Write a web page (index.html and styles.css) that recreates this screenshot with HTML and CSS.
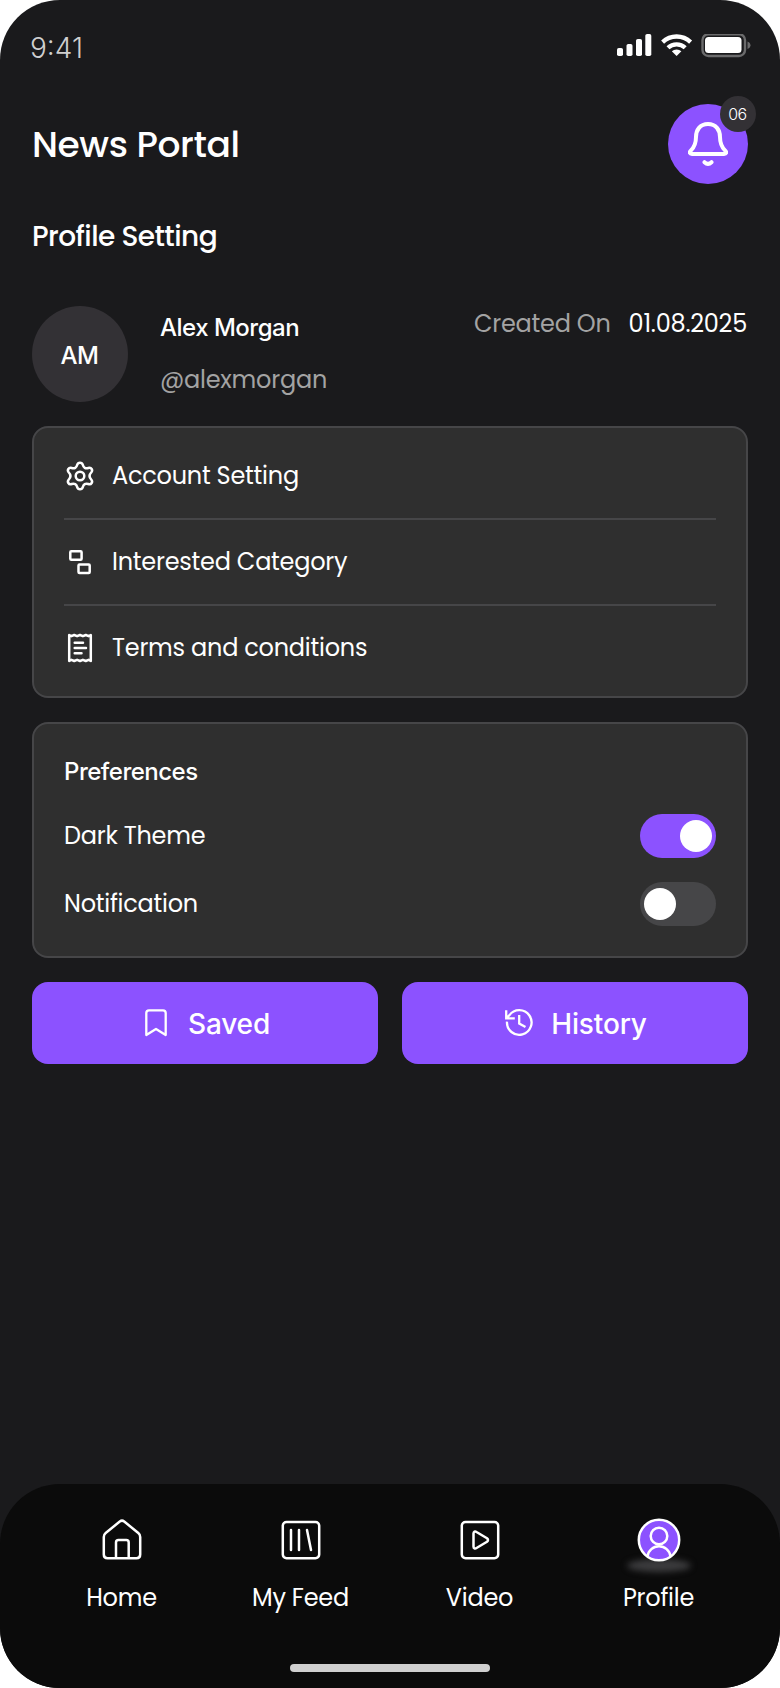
FILE: index.html
```html
<!DOCTYPE html>
<html lang="en">
<head>
<meta charset="utf-8">
<title>News Portal</title>
<link rel="stylesheet" href="styles.css">
</head>
<body>
<div class="phone">
  <div class="status">
    <span class="time">9:41</span>
    <svg class="status-icons" width="134" height="24" viewBox="0 0 134 24">
      <g fill="#fff">
        <rect x="0" y="14" width="6" height="8" rx="1.8"/><rect x="9.5" y="10" width="6" height="12" rx="1.8"/><rect x="19" y="5" width="6" height="17" rx="1.8"/><rect x="28.3" y="0" width="6" height="22" rx="1.8"/>
        <rect x="88" y="3" width="36.500" height="16" rx="3.500"/>
      </g>
      <g fill="none" stroke="#fff" stroke-width="4.300">
        <path d="M45.600 8.100a20.300 20.300 0 0 1 28 0"/><path d="M51 13.800a12.500 12.500 0 0 1 17.200 0"/>
      </g>
      <path d="M54.800 17.300a7.200 7.200 0 0 1 9.600 0L59.600 22z" fill="#fff"/>
      <rect x="85.500" y="0.200" width="42.500" height="21.800" rx="6" fill="none" stroke="#6b6b6c" stroke-width="2.400"/>
      <path d="M130.500 7.500c4 1.500 4 6 0 7.500z" fill="#6b6b6c"/>
    </svg>
  </div>
  <header class="header">
    <h1 class="title">News Portal</h1>
    <div class="bell">
      <svg width="40" height="46" viewBox="0 0 40 46" fill="none" stroke="#fff" stroke-width="4" stroke-linecap="round" stroke-linejoin="round">
        <path d="M20 3C12 3 8 9 8 16C8 24 5.500 27 2.800 29.700C1 31.600 1.800 33 4 33H36C38.200 33 39 31.600 37.200 29.700C34.500 27 32 24 32 16C32 9 28 3 20 3Z"/>
        <path d="M16.500 41.200Q20 44.500 23.500 41.200"/>
      </svg>
      <span class="badge">06</span>
    </div>
  </header>
  <h2 class="section-title">Profile Setting</h2>
  <section class="profile">
    <div class="avatar">AM</div>
    <div class="who"><span class="name">Alex Morgan</span><span class="handle">@alexmorgan</span></div>
    <div class="created"><span class="created-label">Created On</span><span class="date">01.08.2025</span></div>
  </section>
  <section class="card menu">
    <div class="row">
      <svg width="32" height="32" viewBox="0 0 32 32" fill="none" stroke="#fff" stroke-width="2.500" stroke-linejoin="round"><circle cx="16" cy="16" r="4.300"/><path d="M13.200 4.800C14 2 18 2 18.800 4.800C19.500 7.800 21.500 8.900 24.300 8C27.300 7 29.300 10.200 27.200 12.500C25 14.800 25 17.200 27.200 19.500C29.300 21.800 27.300 25 24.300 24C21.500 23.100 19.500 24.200 18.800 27.200C18 30 14 30 13.200 27.200C12.500 24.200 10.500 23.100 7.700 24C4.700 25 2.700 21.800 4.800 19.500C7 17.200 7 14.800 4.800 12.500C2.700 10.200 4.700 7 7.700 8C10.500 8.900 12.500 7.800 13.200 4.800Z"/></svg>
      <span>Account Setting</span>
    </div>
    <div class="row">
      <svg width="32" height="32" viewBox="0 0 32 32" fill="none" stroke="#fff" stroke-width="2.500"><rect x="6.300" y="5.200" width="11.300" height="8.500" rx="1"/><rect x="14.500" y="18.400" width="11.200" height="8.500" rx="1"/></svg>
      <span>Interested Category</span>
    </div>
    <div class="row">
      <svg width="32" height="32" viewBox="0 0 32 32" fill="none" stroke="#fff" stroke-width="2.500" stroke-linejoin="round"><path d="M5.200 3L7.400 4.200L10.200 3L13.100 4.200L16 3L18.900 4.200L21.800 3L24.600 4.200L26.800 3V29L24.600 27.800L21.800 29L18.900 27.800L16 29L13.100 27.800L10.200 29L7.400 27.800L5.200 29Z"/><path d="M10.700 10.700H19M10.700 16H22M10.700 21.300H17.500" stroke-linecap="round"/></svg>
      <span>Terms and conditions</span>
    </div>
  </section>
  <section class="card prefs">
    <h3 class="prefs-title">Preferences</h3>
    <div class="pref"><span>Dark Theme</span><span class="toggle on"><i class="knob"></i></span></div>
    <div class="pref"><span>Notification</span><span class="toggle"><i class="knob"></i></span></div>
  </section>
  <div class="actions">
    <button class="action"><svg width="32" height="32" viewBox="0 0 32 32" fill="none" stroke="#fff" stroke-width="2.300" stroke-linejoin="round"><path d="M6.300 28V6Q6.300 3.300 9 3.300H23Q25.700 3.300 25.700 6V28L16 22Z"/></svg><span>Saved</span></button>
    <button class="action"><svg width="32" height="32" viewBox="0 0 32 32" fill="none" stroke="#fff" stroke-width="2.300"><path d="M4 14.600A12.300 12.300 0 1 0 6.300 8.300L3.400 11.200M3.200 3.200V11.300H11.800M16.200 8V16.600L22.500 20"/></svg><span>History</span></button>
  </div>
  <nav class="nav">
    <div class="tabs">
      <div class="tab"><svg width="44" height="44" viewBox="0 0 44 44" fill="none" stroke="#fff" stroke-width="2.500" stroke-linejoin="round"><path d="M3.800 19Q3.800 16.500 5.700 15L19.800 3.500Q22 1.800 24.200 3.500L38.300 15Q40.200 16.500 40.200 19V36.500Q40.200 40.200 36.500 40.200H7.500Q3.800 40.200 3.800 36.500Z"/><path d="M16 40V24.500Q16 22 18.500 22H26.200Q28.700 22 28.700 24.500V40"/></svg><span>Home</span></div>
      <div class="tab"><svg width="44" height="44" viewBox="0 0 44 44" fill="none" stroke="#fff" stroke-width="2.500" stroke-linecap="round"><rect x="3.800" y="4" width="36.400" height="36.200" rx="3.700"/><path d="M12 12V32M20 12V32M28 12L32 32"/></svg><span>My Feed</span></div>
      <div class="tab"><svg width="44" height="44" viewBox="0 0 44 44" fill="none" stroke="#fff" stroke-width="2.500" stroke-linejoin="round"><rect x="3.800" y="4" width="36.400" height="36.200" rx="3.700"/><path d="M15.500 15.500C15.500 13.500 17 13 18.500 14L29 20.300Q31 22 29 23.700L18.500 30C17 31 15.500 30.500 15.500 28.500Z"/></svg><span>Video</span></div>
      <div class="tab active"><svg width="44" height="44" viewBox="0 0 44 44" stroke="#fff" stroke-width="2.500" fill="none"><circle cx="22" cy="22" r="20.200" fill="#8c52ff"/><circle cx="22" cy="18" r="8.300"/><path d="M10.500 38.300A11.600 11.600 0 0 1 33.500 38.300"/></svg><span>Profile</span></div>
    </div>
    <div class="home-bar"></div>
  </nav>
</div>
</body>
</html>
```
FILE: styles.css
```css
* { box-sizing: border-box; margin: 0; padding: 0; }
body { width: 780px; height: 1688px; background: #fff; font-family: Poppins, Inter, "Liberation Sans", sans-serif; }
svg { display: block; flex: none; }
.phone { width: 780px; height: 1688px; border-radius: 60px; overflow: hidden; background: #1a1a1c; color: #fff; letter-spacing: -0.24px; display: flex; flex-direction: column; }
.status { height: 96px; padding: 34px 29px 0 30px; display: flex; justify-content: space-between; align-items: flex-start; flex: none; }
.time { font: 350 28px/28px Inter, sans-serif; color: #d0d0d0; letter-spacing: 0; }
.header { height: 96px; padding: 8px 32px; display: flex; justify-content: space-between; align-items: center; flex: none; }
.title { font-size: 36px; font-weight: 500; line-height: 54px; padding-top: 1px; letter-spacing: -0.4px; }
.bell { position: relative; width: 80px; height: 80px; border-radius: 50%; background: #8c52ff; display: flex; justify-content: center; padding-top: 17px; }
.badge { position: absolute; right: -8px; top: -8px; width: 36px; height: 36px; border-radius: 50%; background: #333135; font: 350 16px/37px Inter, sans-serif; letter-spacing: -0.5px; text-align: center; padding-right: 1px; }
.section-title { margin: 23px 0 0 32px; font-size: 28px; line-height: 44px; height: 44px; font-weight: 500; letter-spacing: -0.56px; flex: none; }
.profile { margin: 47px 32px 0; height: 96px; display: flex; flex: none; }
.avatar { width: 96px; height: 96px; border-radius: 50%; background: #333135; font: 500 24px/99px Inter, sans-serif; letter-spacing: -0.5px; text-align: center; padding-right: 1px; }
.who { margin-left: 32px; padding-top: 4px; display: flex; flex-direction: column; gap: 16px; font-size: 24px; line-height: 36px; }
.name { font-family: Inter, sans-serif; font-weight: 500; letter-spacing: -0.5px; }
.handle, .created-label { color: #a3a3a3; }
.created { margin-left: auto; padding-right: 1px; display: flex; gap: 18px; font-size: 24px; line-height: 36px; }
.card { margin: 24px 32px 0; border: 2px solid #464648; border-radius: 16px; background: #2f2f2f; padding: 30px; flex: none; font-size: 24px; line-height: 36px; }
.row { height: 36px; display: flex; align-items: center; gap: 16px; }
.row + .row { height: 62px; margin-top: 24px; padding-top: 24px; border-top: 2px solid #464648; }
.prefs { display: flex; flex-direction: column; gap: 24px; }
.prefs-title { font-family: Inter, sans-serif; font-size: 24px; font-weight: 500; line-height: 36px; letter-spacing: -0.5px; }
.pref { height: 44px; display: flex; justify-content: space-between; align-items: center; }
.toggle { width: 76px; height: 44px; border-radius: 22px; background: #464648; padding: 6px 4px; display: flex; }
.toggle.on { background: #8c52ff; justify-content: flex-end; }
.knob { width: 32px; height: 32px; border-radius: 50%; background: #fff; }
.actions { margin: 24px 32px 0; display: grid; grid-template-columns: 1fr 1fr; gap: 24px; flex: none; }
.action { height: 82px; border: 0; border-radius: 16px; background: #8c52ff; color: #fff; display: flex; align-items: center; justify-content: center; gap: 16px; font: 450 28px/36px Inter, sans-serif; letter-spacing: -0.15px; }
.action span { padding-top: 1px; }
.nav { margin-top: auto; height: 204px; border-radius: 60px 60px 0 0; background: #0b0b0b; padding: 34px 32px 16px; display: flex; flex-direction: column; justify-content: space-between; align-items: center; flex: none; }
.tabs { display: grid; grid-template-columns: repeat(4, 179px); }
.tab { display: flex; flex-direction: column; align-items: center; gap: 18px; font-size: 24px; line-height: 36px; position: relative; }
.tab svg { position: relative; }
.active::before { content: ""; position: absolute; left: 58px; top: 41px; width: 64px; height: 13px; border-radius: 50%; background: #3c3c3e; filter: blur(3px); }
.home-bar { width: 200px; height: 8px; border-radius: 4px; background: #cfcfcf; }
```
